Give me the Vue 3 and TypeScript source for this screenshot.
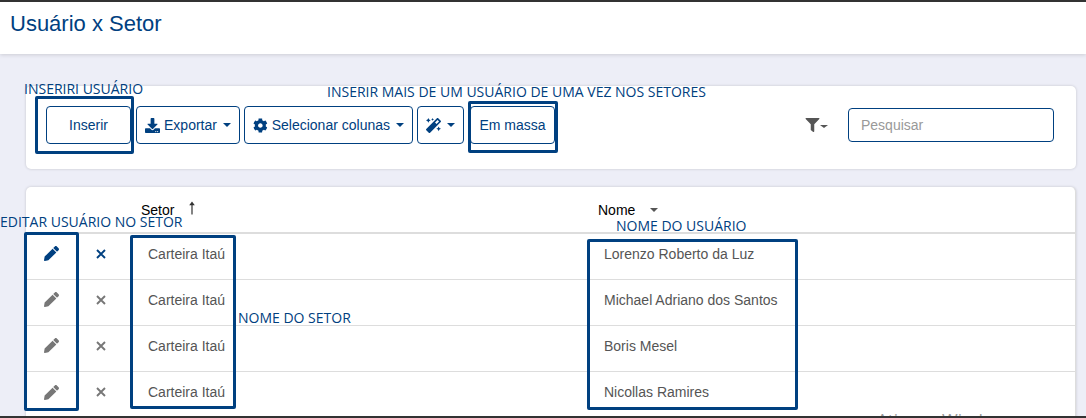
<script setup lang="ts">
interface Row { setor: string; nome: string }
const rows: Row[] = [
  { setor: 'Carteira Itaú', nome: 'Lorenzo Roberto da Luz' },
  { setor: 'Carteira Itaú', nome: 'Michael Adriano dos Santos' },
  { setor: 'Carteira Itaú', nome: 'Boris Mesel' },
  { setor: 'Carteira Itaú', nome: 'Nicollas Ramires' },
]
const pencil = 'M497.9 142.1l-46.1 46.1c-4.7 4.7-12.3 4.7-17 0l-111-111c-4.7-4.7-4.7-12.3 0-17l46.1-46.1c18.7-18.7 49.1-18.7 67.9 0l60.1 60.1c18.8 18.7 18.8 49.1 0 67.9zM284.2 99.8L21.6 362.4.4 483.9c-2.9 16.4 11.4 30.6 27.8 27.8l121.5-21.3 262.6-262.6c4.7-4.7 4.7-12.3 0-17l-111-111c-4.8-4.7-12.4-4.7-17.1 0z'
</script>

<template>
  <div class="page">
    <header class="top"><h1>Usuário x Setor</h1></header>
    <main class="main">
      <section class="card toolbar">
        <button class="btn inserir">Inserir</button>
        <button class="btn exportar">
          <svg class="ico" viewBox="0 0 512 512"><path d="M216 0h80c13.3 0 24 10.7 24 24v168h87.7c17.8 0 26.7 21.5 14.1 34.1L269.7 378.3c-7.5 7.5-19.8 7.5-27.3 0L90.1 226.1c-12.6-12.6-3.7-34.1 14.1-34.1H192V24c0-13.3 10.7-24 24-24zm296 376v112c0 13.3-10.7 24-24 24H24c-13.3 0-24-10.7-24-24V376c0-13.3 10.7-24 24-24h146.7l49 49c20.1 20.1 52.5 20.1 72.6 0l49-49H488c13.3 0 24 10.7 24 24zm-124 88c0-11-9-20-20-20s-20 9-20 20 9 20 20 20 20-9 20-20zm64 0c0-11-9-20-20-20s-20 9-20 20 9 20 20 20 20-9 20-20z" /></svg>
          Exportar<span class="caret"></span>
        </button>
        <button class="btn colunas">
          <svg class="ico" viewBox="0 0 512 512"><path d="M487.4 315.7l-42.6-24.6c4.3-23.2 4.3-47 0-70.2l42.6-24.6c4.9-2.8 7.1-8.6 5.5-14-11.1-35.6-30-67.8-54.7-94.6-3.8-4.1-10-5.1-14.8-2.3L380.8 110c-17.9-15.4-38.5-27.3-60.8-35.1V25.8c0-5.6-3.9-10.5-9.4-11.7-36.7-8.2-74.3-7.8-109.2 0-5.5 1.2-9.4 6.1-9.4 11.7V75c-22.2 7.9-42.8 19.8-60.8 35.1L88.7 85.5c-4.9-2.8-11-1.9-14.8 2.3-24.7 26.7-43.6 58.9-54.7 94.6-1.7 5.4.6 11.2 5.5 14L67.3 221c-4.3 23.2-4.3 47 0 70.2l-42.6 24.6c-4.9 2.8-7.1 8.6-5.5 14 11.1 35.6 30 67.8 54.7 94.6 3.8 4.1 10 5.1 14.8 2.3l42.6-24.6c17.9 15.4 38.5 27.3 60.8 35.1v49.2c0 5.6 3.9 10.5 9.4 11.7 36.7 8.2 74.3 7.8 109.2 0 5.5-1.2 9.4-6.1 9.4-11.7v-49.2c22.2-7.9 42.8-19.8 60.8-35.1l42.6 24.6c4.9 2.8 11 1.9 14.8-2.3 24.7-26.7 43.6-58.9 54.7-94.6 1.5-5.5-.7-11.3-5.6-14.1zM256 336c-44.1 0-80-35.9-80-80s35.9-80 80-80 80 35.9 80 80-35.9 80-80 80z" /></svg>
          Selecionar colunas<span class="caret"></span>
        </button>
        <button class="btn wand">
          <svg class="ico" viewBox="0 0 512 512"><path d="M224 96l16-32 32-16-32-16-16-32-16 32-32 16 32 16 16 32zM80 160l26.66-53.33L160 80l-53.34-26.67L80 0 53.34 53.33 0 80l53.34 26.67L80 160zm352 128l-26.66 53.33L352 368l53.34 26.67L432 448l26.66-53.33L512 368l-53.34-26.67L432 288zm70.62-193.77L417.77 9.38C411.53 3.12 403.34 0 395.15 0c-8.19 0-16.38 3.12-22.63 9.38L9.38 372.52c-12.5 12.5-12.5 32.76 0 45.25l84.85 84.85c6.25 6.25 14.44 9.37 22.62 9.37 8.19 0 16.38-3.12 22.63-9.37l363.14-363.15c12.5-12.48 12.5-32.75 0-45.24zM359.45 203.46l-50.91-50.91 86.6-86.6 50.91 50.91-86.6 86.6z" /></svg>
          <span class="caret"></span>
        </button>
        <button class="btn massa">Em massa</button>
        <div class="spacer"></div>
        <div class="filter">
          <svg viewBox="0 0 512 512"><path d="M487.976 0H24.028C2.71 0-8.047 25.866 7.058 40.971L192 225.941V432c0 7.831 3.821 15.17 10.237 19.662l80 55.98C298.02 518.69 320 507.493 320 487.98V225.941l184.947-184.97C520.021 25.896 509.338 0 487.976 0z" /></svg>
          <span class="caret small"></span>
        </div>
        <input class="search" type="text" placeholder="Pesquisar" />
      </section>

      <section class="card table">
        <div class="row head">
          <div></div>
          <div></div>
          <div class="th">Setor
            <svg class="arrow" viewBox="0 0 8 14"><path d="M4 0.5L1.2 4.2H3.4V13.5H4.6V4.2H6.8Z" /></svg>
          </div>
          <div class="th nome">Nome<span class="caret gray"></span></div>
        </div>
        <div v-for="(r, i) in rows" :key="r.nome" class="row" :class="{ active: i === 0 }">
          <div class="act"><svg class="pen" viewBox="0 0 512 512"><path :d="pencil" /></svg></div>
          <div class="act"><svg class="x" viewBox="0 0 10 10"><path d="M1 1L9 9M9 1L1 9" /></svg></div>
          <div class="td">{{ r.setor }}</div>
          <div class="td">{{ r.nome }}</div>
        </div>
      </section>
    </main>

    <span class="note n1">INSERIRI USUÁRIO</span>
    <span class="note n2">INSERIR MAIS DE UM USUÁRIO DE UMA VEZ NOS SETORES</span>
    <span class="note n3">EDITAR USUÁRIO NO SETOR</span>
    <span class="note n4">NOME DO USUÁRIO</span>
    <span class="note n5">NOME DO SETOR</span>
    <div class="mark m1"></div>
    <div class="mark m2"></div>
    <div class="mark m3"></div>
    <div class="mark m4"></div>
    <div class="mark m5"></div>
    <span class="windows">Ativar o Windows</span>
    <div class="edge"></div>
  </div>
</template>

<style>
html, body { margin: 0; padding: 0; overflow: hidden; }
</style>

<style scoped>
.page {
  position: relative;
  width: 1086px;
  height: 418px;
  overflow: hidden;
  background: #edeef7;
  border-top: 2px solid #333;
  box-sizing: border-box;
  font-family: "Liberation Sans", Arial, sans-serif;
  font-size: 14px;
}
.top {
  height: 52px;
  background: #fff;
  box-shadow: 0 1px 4px rgba(0, 0, 0, .14);
  padding: 10px 10px 0;
  box-sizing: border-box;
}
h1 {
  margin: 0;
  font-size: 22px;
  font-weight: 400;
  line-height: 24px;
  color: #004080;
}
.main { padding: 32px 10px 0 26px; }
.card {
  background: #fff;
  border-radius: 5px;
  box-shadow: 0 0 3px rgba(0, 0, 0, .18);
}
.toolbar {
  display: flex;
  align-items: center;
  height: 83px;
  padding: 0 22px 5px 20px;
  box-sizing: border-box;
  gap: 4px;
}
.btn {
  display: flex;
  align-items: center;
  justify-content: center;
  height: 38px;
  padding: 0 8px;
  background: #fff;
  border: 1px solid #004080;
  border-radius: 4px;
  box-sizing: border-box;
  color: #004080;
  font: 14px "Liberation Sans", Arial, sans-serif;
  white-space: nowrap;
}
.inserir { width: 85px; margin-right: 1px; }
.exportar { width: 104px; }
.colunas { width: 169px; }
.wand { width: 47px; }
.massa { width: 85px; margin-left: 2px; }
.ico { width: 15px; height: 15px; margin-right: 4px; fill: #004080; }
.caret {
  display: inline-block;
  margin-left: 6px;
  border-left: 4px solid transparent;
  border-right: 4px solid transparent;
  border-top: 4px solid #004080;
}
.wand .ico { margin-right: 0; }
.caret.small { margin-left: 0; border-top-color: #555; border-top-width: 3px; margin-top: 3px; }
.caret.gray { margin-left: 15px; border-top-color: #555; border-top-width: 4px; }
.spacer { flex: 1; }
.filter { display: flex; align-items: center; margin-right: 16px; }
.filter svg { width: 15px; height: 14px; fill: #555; }
.search {
  width: 206px;
  height: 34px;
  padding: 0 12px;
  box-sizing: border-box;
  border: 1px solid #004080;
  border-radius: 4px;
  outline: none;
  font: 14px "Liberation Sans", Arial, sans-serif;
}
.search::placeholder { color: #999; opacity: 1; }
.table {
  margin-top: 18px;
  height: 240px;
  border-right: 1px solid #ddd;
}
.row {
  display: grid;
  grid-template-columns: 50px 49px 456px 1fr;
  height: 46px;
  box-sizing: border-box;
  border-bottom: 1px solid #ddd;
  align-items: center;
  color: #555;
}
.row.head {
  height: 47px;
  border-bottom: 2px solid #ddd;
  align-items: start;
  color: #000;
}
.th { padding: 15px 0 0 16px; display: flex; align-items: center; line-height: 16px; }
.th.nome { padding-left: 17px; }
.arrow { width: 8px; height: 14px; margin-left: 14px; margin-top: -4px; fill: #333; }
.td { padding-left: 23px; margin-top: -6px; }
.act { display: flex; justify-content: center; margin-top: -6px; }
.pen { width: 15px; height: 15px; fill: #777; }
.x { width: 10px; height: 10px; fill: none; stroke: #777; stroke-width: 1.9; }
.active .pen { fill: #004080; }
.active .x { stroke: #004080; }
.row:last-child { border-bottom: 0; }
.note {
  position: absolute;
  font-family: "Open Sans", sans-serif;
  font-size: 14px;
  line-height: 16px;
  color: #004080;
  white-space: nowrap;
}
.n1 { left: 24px; top: 79px; }
.n2 { left: 327px; top: 82px; }
.n3 { left: 0; top: 212px; }
.n4 { left: 616px; top: 216px; }
.n5 { left: 238px; top: 308px; }
.mark {
  position: absolute;
  border: 3px solid #004080;
  border-radius: 2px;
  box-sizing: border-box;
}
.m1 { left: 35px; top: 94px; width: 99px; height: 58px; }
.m2 { left: 468px; top: 99px; width: 90px; height: 52px; }
.m3 { left: 24px; top: 230px; width: 55px; height: 179px; }
.m4 { left: 130px; top: 233px; width: 106px; height: 174px; }
.m5 { left: 587px; top: 237px; width: 211px; height: 171px; }
.windows {
  position: absolute;
  left: 877px;
  top: 408px;
  font-family: "Open Sans", sans-serif;
  font-size: 17px;
  line-height: 20px;
  color: #999;
}
.edge {
  position: absolute;
  left: 0;
  right: 0;
  bottom: 0;
  height: 2px;
  background: #333;
}
</style>
